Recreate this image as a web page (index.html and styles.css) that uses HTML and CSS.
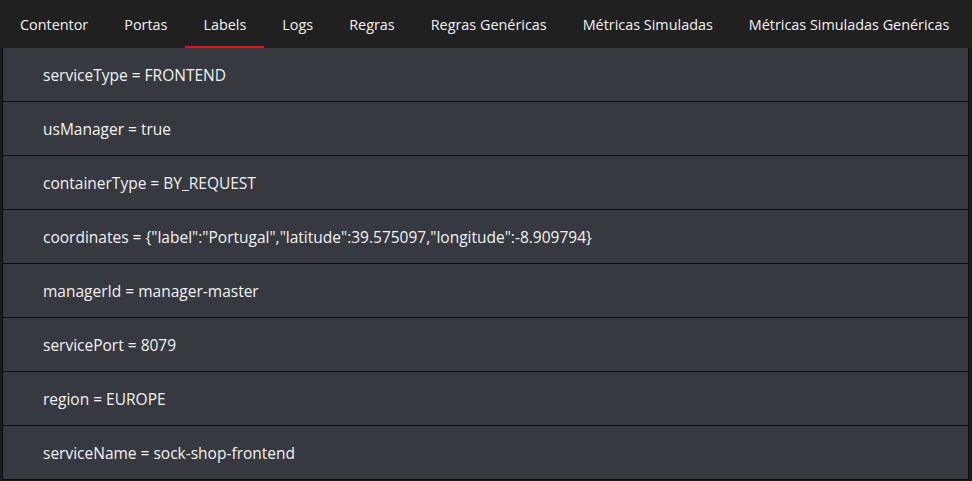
FILE: index.html
```
<!DOCTYPE html>
<html lang="pt">
<head>
<meta charset="utf-8">
<link rel="stylesheet" href="styles.css">
</head>
<body>
<nav class="tabs">
  <a class="tab">Contentor</a>
  <a class="tab">Portas</a>
  <a class="tab active">Labels</a>
  <a class="tab">Logs</a>
  <a class="tab">Regras</a>
  <a class="tab">Regras Genéricas</a>
  <a class="tab">Métricas Simuladas</a>
  <a class="tab">Métricas Simuladas Genéricas</a>
</nav>
<ul class="list">
  <li class="row">serviceType = FRONTEND</li>
  <li class="row">usManager = true</li>
  <li class="row">containerType = BY_REQUEST</li>
  <li class="row">coordinates = {"label":"Portugal","latitude":39.575097,"longitude":-8.909794}</li>
  <li class="row">managerId = manager-master</li>
  <li class="row">servicePort = 8079</li>
  <li class="row">region = EUROPE</li>
  <li class="row">serviceName = sock-shop-frontend</li>
</ul>
</body>
</html>
```
FILE: styles.css
```
html, body {
  margin: 0;
  padding: 0;
  background: #1c1c1c;
  height: 100%;
  overflow: hidden;
}
body {
  font-family: "Open Sans", "Noto Sans", sans-serif;
  color: #f2f2f2;
}
.tabs {
  display: flex;
  height: 48px;
  background: #202020;
  padding-left: 2px;
  overflow: hidden;
}
.tab {
  display: flex;
  align-items: center;
  flex-shrink: 0;
  white-space: nowrap;
  padding: 4px 18px 2px;
  font-size: 14.4px;
  border-bottom: 2px solid transparent;
  box-sizing: border-box;
  height: 48px;
}
.tab.active {
  border-bottom-color: #e8101c;
}
.list {
  list-style: none;
  margin: 0 3px 0 2px;
  padding: 0;
  border-left: 1px solid #0c0c0c;
  border-right: 1px solid #0c0c0c;
}
.row {
  height: 53px;
  display: flex;
  align-items: center;
  white-space: nowrap;
  padding-left: 40px;
  background: #363940;
  border-bottom: 1px solid #0c0c0c;
  font-size: 15.5px;
}
```
